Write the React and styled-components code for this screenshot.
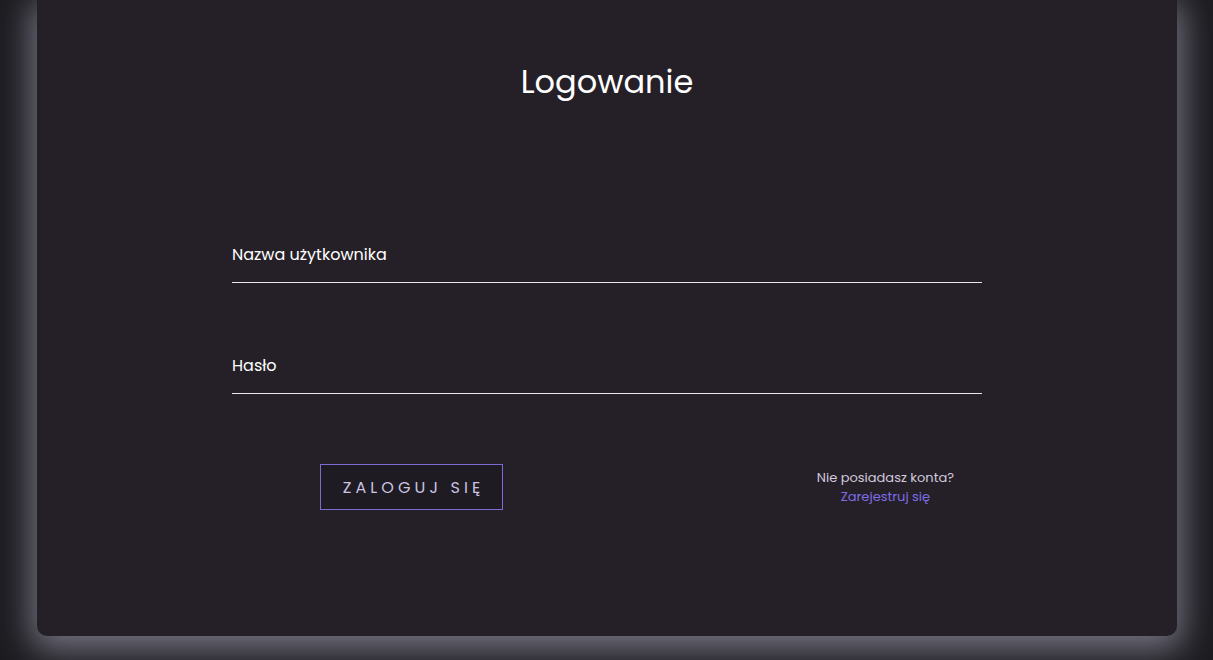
import React, { useState } from 'react'
import styled, { createGlobalStyle } from 'styled-components'

const GlobalStyle = createGlobalStyle`
	html, body {
		margin: 0;
		padding: 0;
		background: #1c1b20;
		font-family: Poppins, "Noto Sans", sans-serif;
		overflow: hidden;}
	* {
		box-sizing: border-box;}
`;

const Page = styled.div`
	height: 660px;
	padding: 0 36px 0 37px;
	overflow: hidden;
`;

const Card = styled.section`
	height: 636px;
	background: #252027;
	border-radius: 0 0 10px 10px;
	box-shadow: 0 8px 34px 6px rgba(122, 120, 134, 0.95);
	display: flex;
	flex-direction: column;
	align-items: center;
	padding-top: 66px;
`;

const Title = styled.h1`
	margin: 0;
	color: #ffffff;
	font-weight: 400;
	font-size: 32px;
	line-height: 1;
`;

const Form = styled.form`
	width: 750px;
	margin-top: 149px;
	display: flex;
	flex-direction: column;
`;

const Field = styled.label`
	display: flex;
	flex-direction: column;
	& + & {
		margin-top: 75px;}
	.label {
		color: #ffffff;
		font-size: 16px;
		line-height: 1;}
	input {
		margin: 0;
		padding: 0;
		height: 20px;
		background: transparent;
		border: 0;
		border-bottom: 1px solid #e8e6ec;
		color: #ffffff;
		font: inherit;
		outline: none;}
`;

const Actions = styled.div`
	margin-top: 70px;
	display: flex;
	align-items: center;
	justify-content: space-between;
	padding: 0 28px 0 88px;
`;

const Button = styled.button`
	width: 183px;
	height: 46px;
	padding: 0 0 0 4px;
	background: #1f1b22;
	border: 1px solid #7a6cd0;
	color: #cbc3e4;
	font-family: inherit;
	font-size: 16px;
	letter-spacing: 4.1px;
	text-transform: uppercase;
	cursor: pointer;
`;

const Register = styled.div`
	text-align: center;
	font-size: 13px;
	line-height: 19px;
	color: #d2cade;
	a {
		color: #7e6ce6;
		text-decoration: none;}
`;

const App = () => {
	const [login, setLogin] = useState('')
	const [password, setPassword] = useState('')

	return (
		<Page>
			<GlobalStyle />
			<Card>
				<Title>Logowanie</Title>
				<Form onSubmit={(e) => e.preventDefault()}>
					<Field>
						<span className='label'>Nazwa użytkownika</span>
						<input value={login} onChange={(e) => setLogin(e.target.value)} />
					</Field>
					<Field>
						<span className='label'>Hasło</span>
						<input type='password' value={password} onChange={(e) => setPassword(e.target.value)} />
					</Field>
					<Actions>
						<Button type='submit'>Zaloguj się</Button>
						<Register>
							Nie posiadasz konta?<br />
							<a href='#'>Zarejestruj się</a>
						</Register>
					</Actions>
				</Form>
			</Card>
		</Page>
	)
}

export default App
